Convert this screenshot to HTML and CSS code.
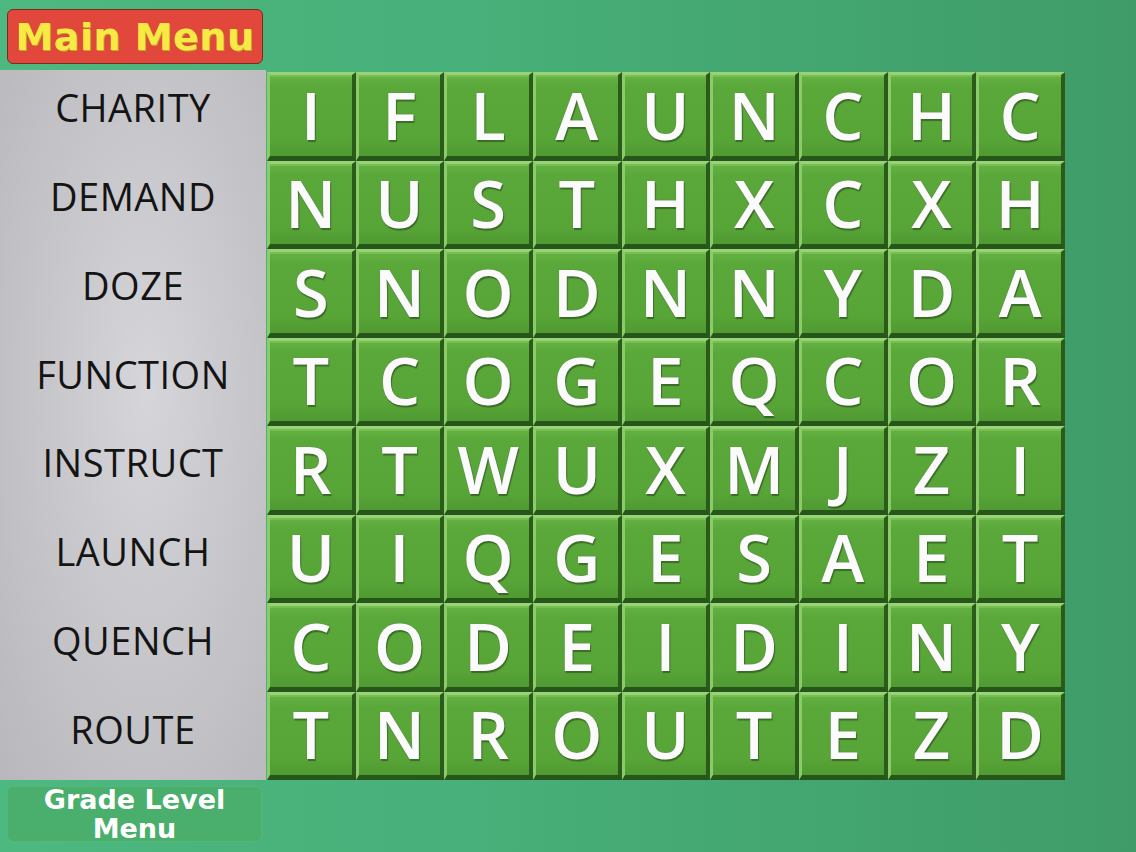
FILE: index.html
```html
<!DOCTYPE html>
<html>
<head>
<meta charset="utf-8">
<link rel="stylesheet" href="styles.css">
</head>
<body>
<div class="page">
  <div class="top">
    <div class="btn-main">Main Menu</div>
  </div>
  <div class="main">
    <div class="words">
      <div class="word">CHARITY</div>
      <div class="word">DEMAND</div>
      <div class="word">DOZE</div>
      <div class="word">FUNCTION</div>
      <div class="word">INSTRUCT</div>
      <div class="word">LAUNCH</div>
      <div class="word">QUENCH</div>
      <div class="word">ROUTE</div>
    </div>
    <div class="board">
      <div class="tile">I</div><div class="tile">F</div><div class="tile">L</div><div class="tile">A</div><div class="tile">U</div><div class="tile">N</div><div class="tile">C</div><div class="tile">H</div><div class="tile">C</div>
      <div class="tile">N</div><div class="tile">U</div><div class="tile">S</div><div class="tile">T</div><div class="tile">H</div><div class="tile">X</div><div class="tile">C</div><div class="tile">X</div><div class="tile">H</div>
      <div class="tile">S</div><div class="tile">N</div><div class="tile">O</div><div class="tile">D</div><div class="tile">N</div><div class="tile">N</div><div class="tile">Y</div><div class="tile">D</div><div class="tile">A</div>
      <div class="tile">T</div><div class="tile">C</div><div class="tile">O</div><div class="tile">G</div><div class="tile">E</div><div class="tile">Q</div><div class="tile">C</div><div class="tile">O</div><div class="tile">R</div>
      <div class="tile">R</div><div class="tile">T</div><div class="tile">W</div><div class="tile">U</div><div class="tile">X</div><div class="tile">M</div><div class="tile">J</div><div class="tile">Z</div><div class="tile">I</div>
      <div class="tile">U</div><div class="tile">I</div><div class="tile">Q</div><div class="tile">G</div><div class="tile">E</div><div class="tile">S</div><div class="tile">A</div><div class="tile">E</div><div class="tile">T</div>
      <div class="tile">C</div><div class="tile">O</div><div class="tile">D</div><div class="tile">E</div><div class="tile">I</div><div class="tile">D</div><div class="tile">I</div><div class="tile">N</div><div class="tile">Y</div>
      <div class="tile">T</div><div class="tile">N</div><div class="tile">R</div><div class="tile">O</div><div class="tile">U</div><div class="tile">T</div><div class="tile">E</div><div class="tile">Z</div><div class="tile">D</div>
    </div>
  </div>
  <div class="bottom">
    <div class="btn-grade">Grade Level<br>Menu</div>
  </div>
</div>
</body>
</html>
```
FILE: styles.css
```css
html, body {
  margin: 0;
  padding: 0;
}
body {
  width: 1136px;
  height: 852px;
  overflow: hidden;
  background: linear-gradient(90deg, #4db880 0%, #48b07a 40%, #3f9c68 100%);
}
.page {
  display: flex;
  flex-direction: column;
  padding-top: 9px;
  gap: 6px;
}
.top {
  display: flex;
  padding-left: 7px;
}
.btn-main {
  width: 254px;
  height: 53px;
  background: #e2473b;
  border: 1px solid #7a2a22;
  border-radius: 6px;
  display: flex;
  align-items: center;
  justify-content: center;
  font-family: "DejaVu Sans", sans-serif;
  font-weight: bold;
  font-size: 38px;
  letter-spacing: 0.5px;
  color: #f8ea45;
  text-shadow: 1px 1px 0 #c0a82a;
}
.main {
  display: flex;
  height: 710px;
}
.words {
  width: 266px;
  height: 710px;
  display: flex;
  flex-direction: column;
  background: radial-gradient(ellipse at 55% 45%, #d6d6da 0%, #c8c8cc 45%, #b8b8bc 100%);
}
.word {
  height: 88.75px;
  box-sizing: border-box;
  padding-bottom: 14px;
  display: flex;
  align-items: center;
  justify-content: center;
  font-family: "Open Sans", sans-serif;
  font-size: 38px;
  letter-spacing: 0.5px;
  line-height: 1;
  color: #141414;
}
.board {
  margin-left: 1px;
  margin-top: 2px;
  width: 798px;
  height: 708px;
  display: grid;
  grid-template-columns: repeat(9, minmax(0, 1fr));
  grid-template-rows: repeat(8, minmax(0, 1fr));
  background: #2a5c1a;
}
.tile {
  box-sizing: border-box;
  border-top: 3px solid #98d377;
  border-left: 3px solid #8ccb6a;
  border-right: 4px solid #2a5b1a;
  border-bottom: 5px solid #27561a;
  background: linear-gradient(180deg, #66b244 0%, #5aa83a 15%, #57a437 80%, #4f9a32 100%);
  box-shadow: inset 0 2px 0 #76bd52;
  display: flex;
  align-items: center;
  justify-content: center;
  font-family: "Open Sans", sans-serif;
  font-weight: 600;
  font-size: 65px;
  line-height: 1;
  color: #fbfbfb;
  text-shadow: 0 0 1px #6a6a6a, 1px 2px 1px rgba(0, 0, 0, 0.35);
}
.bottom {
  display: flex;
  padding-left: 7px;
}
.btn-grade {
  width: 255px;
  height: 56px;
  box-sizing: border-box;
  background: #4aae6c;
  border: 1px solid #56b876;
  border-radius: 6px;
  display: flex;
  align-items: center;
  justify-content: center;
  text-align: center;
  font-family: "DejaVu Sans", sans-serif;
  font-weight: bold;
  font-size: 27px;
  line-height: 29px;
  color: #ffffff;
}
```
